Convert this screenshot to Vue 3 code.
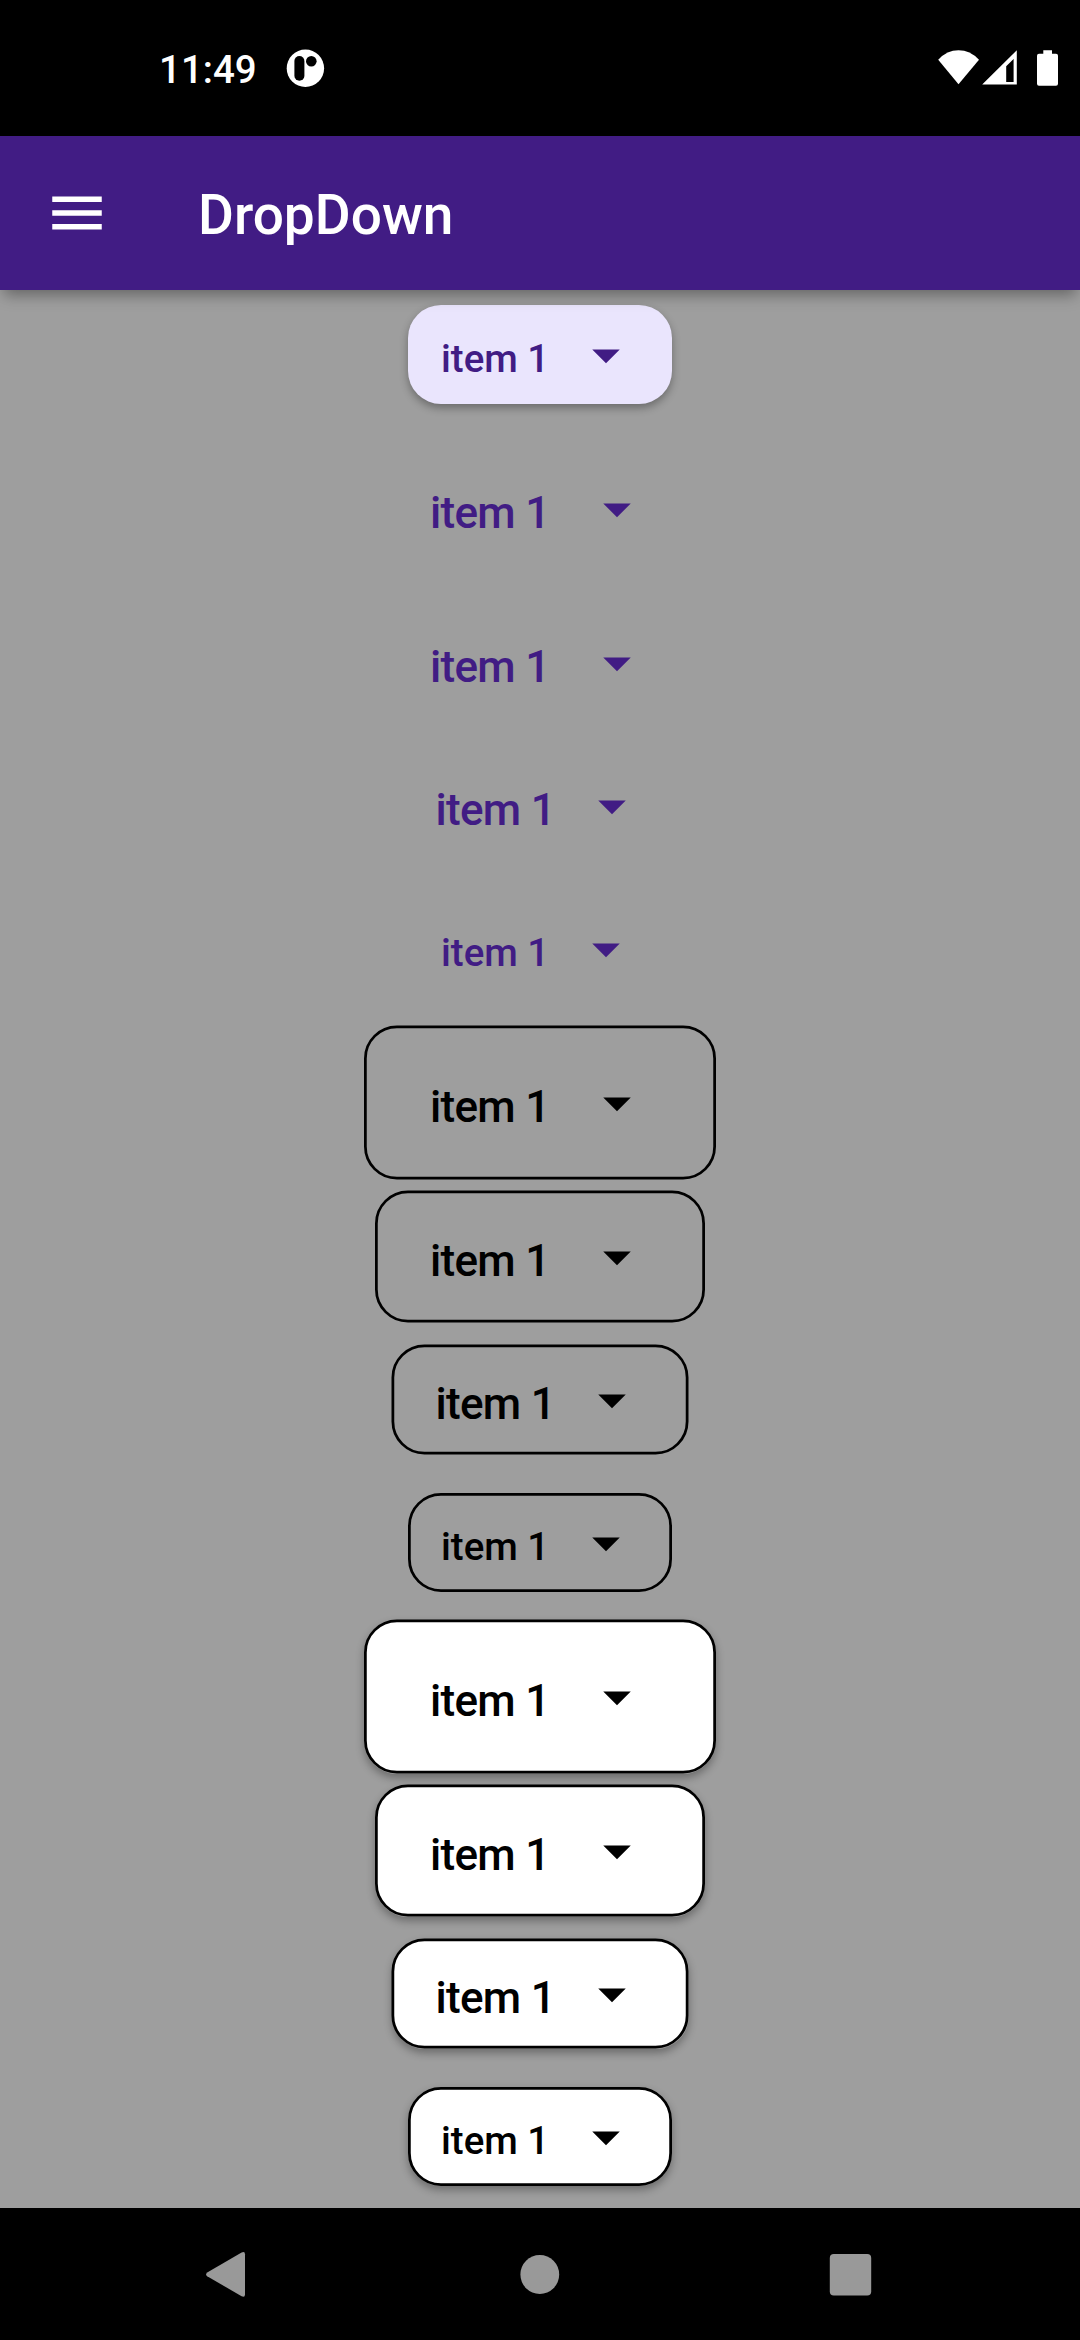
<script setup>
const sizes = [
  { size: 'xl', w: 352, h: 154, dx: 0, dy: -0.5 },
  { size: 'lg', w: 330, h: 132, dx: 0, dy: -0.5 },
  { size: 'md', w: 297, h: 110, dx: -0.5, dy: -0.5 },
  { size: 'sm', w: 264, h: 99, dx: 0, dy: 0 },
]
const group = (kind) => sizes.map((s) => ({ ...s, kind }))
const rows = [
  { ...sizes[3], kind: 'elevated' },
  ...group('text'),
  ...group('outlined'),
  ...group('contained'),
]
</script>

<template>
  <div class="screen">
    <header class="status">
      <span class="clock">11:49</span>
      <svg class="notif" width="40" height="40" viewBox="0 0 40 40">
        <circle cx="20.4" cy="20.3" r="18.7" fill="#fff" />
        <rect x="9.4" y="8" width="10" height="24.7" rx="5" />
        <circle cx="26.3" cy="13.3" r="5.3" />
      </svg>
      <svg class="signals" width="130" height="40" viewBox="0 0 130 40" fill="#fff">
        <path d="M8.2 11.7Q17 2.3 28.5 2.3Q40 2.3 49 11.7L28.5 36.3Z" />
        <path fill-rule="evenodd" d="M86.8 2.3V36.5H52.2ZM83.6 11L76.2 18.2V34H83.6Z" />
        <path d="M113.3 2.3H122V5.8H126Q128 5.8 128 7.8V35.7Q128 37.7 126 37.7H109Q107 37.7 107 35.7V7.8Q107 5.8 109 5.8H113.3Z" />
      </svg>
    </header>

    <div class="appbar">
      <svg class="menu" width="66" height="66" viewBox="0 0 24 24" fill="#fff">
        <path d="M3 18h18v-2H3v2zm0-5h18v-2H3v2zm0-7v2h18V6H3z" />
      </svg>
      <h1>DropDown</h1>
    </div>

    <main>
      <div class="list">
        <div v-for="(r, i) in rows" :key="i" class="row" :class="{ tall: r.size === 'xl' }">
          <button class="drop" :class="[r.size, r.kind]">
            <svg
              v-if="r.kind === 'outlined' || r.kind === 'contained'"
              class="frame"
              :width="r.w"
              :height="r.h"
            >
              <rect
                :x="1.375 + r.dx"
                :y="1.375 + r.dy"
                :width="r.w - 2.75"
                :height="r.h - 2.75"
                rx="31.6"
              />
            </svg>
            <span class="label">item 1</span>
            <svg class="arrow" width="66" height="66" viewBox="0 0 66 66" fill="currentColor">
              <path d="M19.25 27.5H46.75L33 41.25Z" />
            </svg>
          </button>
        </div>
      </div>
    </main>

    <nav>
      <svg width="48" height="50" viewBox="0 0 48 50">
        <path d="M4.2 23.6L38.6 3.5Q42 2 42 5.2V45.6Q42 48.8 38.6 47.3L4.2 27.2Q2 25.4 4.2 23.6Z" />
      </svg>
      <svg width="48" height="50" viewBox="0 0 48 50"><circle cx="24.8" cy="25.5" r="19.4" /></svg>
      <svg width="48" height="50" viewBox="0 0 48 50"><rect x="3.8" y="5" width="41.4" height="41.4" rx="4" /></svg>
    </nav>
  </div>
</template>

<style>
body {
  margin: 0;
}
</style>

<style scoped>
.screen {
  width: 1080px;
  height: 2340px;
  display: flex;
  flex-direction: column;
  overflow: hidden;
  background: #9e9e9e;
  font-family: Roboto, sans-serif;
  font-weight: 500;
}
.status {
  height: 136px;
  flex: none;
  display: flex;
  box-sizing: border-box;
  padding: 48px 20px 0 159px;
  background: #000;
  color: #fff;
}
.clock {
  width: 126px;
  font-size: 38.5px;
  line-height: 44px;
}
.signals {
  margin-left: auto;
}
.appbar {
  position: relative;
  z-index: 1;
  height: 154px;
  flex: none;
  display: flex;
  align-items: center;
  box-sizing: border-box;
  padding-left: 44px;
  background: #411c84;
  color: #fff;
  box-shadow: 0 9px 14px -4px rgba(0, 0, 0, 0.36);
}
h1 {
  margin: 4px 0 0 88px;
  font-size: 55px;
  font-weight: 500;
  line-height: 66px;
}
main {
  height: 1918px;
  flex: none;
  overflow: hidden;
}
.list {
  margin-top: -7px;
}
.row {
  height: 143px;
  display: flex;
  align-items: center;
  justify-content: center;
}
.row.tall {
  height: 165px;
}
.drop {
  position: relative;
  display: flex;
  align-items: center;
  box-sizing: border-box;
  border: 0;
  border-radius: 33px;
  background: none;
  color: #411c84;
  font-family: inherit;
  font-weight: 500;
  font-size: 44px;
  letter-spacing: -0.7px;
  text-align: left;
}
.xl {
  width: 352px;
  height: 154px;
  padding: 0 66px;
}
.lg {
  width: 330px;
  height: 132px;
  padding: 0 55px;
}
.md {
  width: 297px;
  height: 110px;
  padding: 0 44px;
}
.sm {
  width: 264px;
  height: 99px;
  padding: 0 33px;
  font-size: 38.5px;
  letter-spacing: 0;
}
.elevated {
  background: #eae5fd;
}
.outlined,
.contained {
  color: #000;
}
.elevated,
.contained {
  box-shadow: 0 4px 8px rgba(0, 0, 0, 0.32);
}
.frame {
  position: absolute;
  left: 0;
  top: 0;
  overflow: visible;
  fill: none;
  stroke: #000;
  stroke-width: 2.75px;
}
.contained .frame {
  fill: #fff;
}
.label {
  position: relative;
  flex: 1;
  padding-top: 8px;
  line-height: 52px;
}
.arrow {
  position: relative;
  flex: none;
}
nav {
  height: 132px;
  flex: none;
  display: flex;
  justify-content: space-between;
  align-items: flex-start;
  box-sizing: border-box;
  padding: 41px 206px 0 203px;
  background: #000;
  fill: #999;
}
</style>
